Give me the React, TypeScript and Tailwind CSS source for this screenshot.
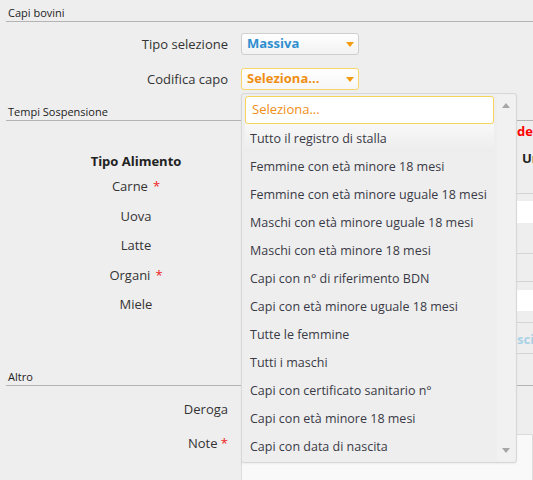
import React from 'react';

const options = [
  'Tutto il registro di stalla',
  'Femmine con età minore 18 mesi',
  'Femmine con età minore uguale 18 mesi',
  'Maschi con età minore uguale 18 mesi',
  'Maschi con età minore 18 mesi',
  'Capi con n° di riferimento BDN',
  'Capi con età minore uguale 18 mesi',
  'Tutte le femmine',
  'Tutti i maschi',
  'Capi con certificato sanitario n°',
  'Capi con età minore 18 mesi',
  'Capi con data di nascita',
];

const alimenti = [
  { name: 'Carne', req: true },
  { name: 'Uova', req: false },
  { name: 'Latte', req: false },
  { name: 'Organi', req: true },
  { name: 'Miele', req: false },
];

function Caret({ color = '#f39c12' }: { color?: string }) {
  return (
    <svg width="8" height="5" viewBox="0 0 8 5" className="shrink-0">
      <path d="M0 0 L8 0 L4 5 Z" fill={color} />
    </svg>
  );
}

function SectionHeader({ title }: { title: string }) {
  return (
    <div className="ml-[6px] h-[17px] border-b border-[#b4b4b4] pl-[2px] text-[11px] leading-[16px] text-[#222]">
      {title}
    </div>
  );
}

export default function App() {
  return (
    <div
      className="relative w-[533px] h-[480px] overflow-hidden bg-[#eeeeee] text-[#333] text-[13px]"
      style={{ fontFamily: '"Open Sans", "Noto Sans", sans-serif' }}
    >
      {/* Capi bovini */}
      <div className="pt-[5px]">
        <SectionHeader title="Capi bovini" />
      </div>

      <div className="mt-[11px] flex items-center h-[22px]">
        <div className="w-[228px] text-right leading-[16px]">Tipo selezione</div>
        <div className="ml-[13px] w-[118px] h-[22px] rounded-[3px] border border-[#cfcfcf] bg-gradient-to-b from-white to-[#f2f2f2] flex items-center justify-between pl-[5px] pr-[4px]">
          <span className="font-bold text-[#2f8fcf]">Massiva</span>
          <Caret />
        </div>
      </div>

      <div className="mt-[13px] flex items-center h-[22px]">
        <div className="w-[228px] text-right leading-[16px]">Codifica capo</div>
        <div className="ml-[13px] w-[118px] h-[22px] rounded-[3px] border border-[#f7d56a] bg-gradient-to-b from-white to-[#f6f6f6] flex items-center justify-between pl-[5px] pr-[4px]">
          <span className="font-bold text-[#ef8e14]">Seleziona...</span>
          <Caret />
        </div>
      </div>

      {/* Tempi Sospensione */}
      <div className="mt-[14px]">
        <SectionHeader title="Tempi Sospensione" />
      </div>

      <div className="ml-[6px] flex h-[248px]">
        <div className="w-[260px] pt-[30px] text-center">
          <div className="font-bold leading-[20px] text-[#222]">Tipo Alimento</div>
          {alimenti.map((a) => (
            <div key={a.name} className="h-[29.5px] pt-[2px] flex items-center justify-center">
              {a.name}
              {a.req && <span className="ml-[5px] text-[#ee2222]">*</span>}
            </div>
          ))}
        </div>
        <div className="w-[251px]" />
        <div className="flex-1 overflow-hidden whitespace-nowrap font-bold">
          <div className="mt-[2px] leading-[16px] text-[#ff0000]">dei</div>
          <div className="mt-[11px] leading-[16px] text-[#222] pl-[5px]">Un</div>
          <div className="h-[27px]" />
          <div className="h-[1px] bg-[#d4d4d4]" />
          <div className="mt-[7px] h-[22px] bg-white" />
          <div className="h-[30px]" />
          <div className="h-[1px] bg-[#d4d4d4]" />
          <div className="h-[27px]" />
          <div className="h-[1px] bg-[#d4d4d4]" />
          <div className="mt-[8px] h-[21px] bg-white" />
          <div className="h-[11px]" />
          <div className="h-[1px] bg-[#d4d4d4]" />
          <div className="mt-[8px] leading-[16px] text-[#a9d2e6]">sci</div>
          <div className="h-[6px]" />
          <div className="h-[1px] bg-[#d4d4d4]" />
        </div>
      </div>

      {/* Altro */}
      <SectionHeader title="Altro" />

      <div className="mt-[12px] flex items-center h-[22px]">
        <div className="w-[228px] text-right leading-[16px]">Deroga</div>
      </div>

      <div className="mt-[14px] flex items-start">
        <div className="w-[228px] text-right leading-[16px] pt-[1px]">
          Note <span className="text-[#ee2222]">*</span>
        </div>
        <div className="ml-[13px] flex-1 h-[60px] rounded-tl-[3px] border border-[#dcdcdc] bg-[#f9f9f9]" />
      </div>

      {/* Open dropdown */}
      <div className="absolute left-[241px] top-[93px] w-[276px] h-[370px] rounded-[3px] border border-[#d8d8d8] bg-[#eeeeee] shadow-[0_1px_2px_rgba(0,0,0,0.06)] flex z-10">
        <div className="flex-1 min-w-0 pl-[3px] pt-[2px]">
          <div className="h-[28px] rounded-[3px] border border-[#f7d45c] bg-white flex items-center pl-[6px] text-[#ef8e14]">
            Seleziona...
          </div>
          {options.map((o, i) => (
            <div
              key={o}
              className={
                'h-[28px] flex items-center pl-[5px] pt-[2px] whitespace-nowrap text-[12.5px] text-[#3a3a46] ' +
                (i === 0 ? 'bg-gradient-to-b from-[#f8f8f8] to-[#ececec]' : '')
              }
            >
              {o}
            </div>
          ))}
        </div>
        <div className="w-[18px] ml-[3px] mr-[1px] my-[1px] bg-[#f1f1f1] flex flex-col items-center justify-between py-[8px]">
          <svg width="8" height="5" viewBox="0 0 8 5">
            <path d="M0 5 L8 5 L4 0 Z" fill="#a6a6a6" />
          </svg>
          <Caret color="#a6a6a6" />
        </div>
      </div>
    </div>
  );
}
